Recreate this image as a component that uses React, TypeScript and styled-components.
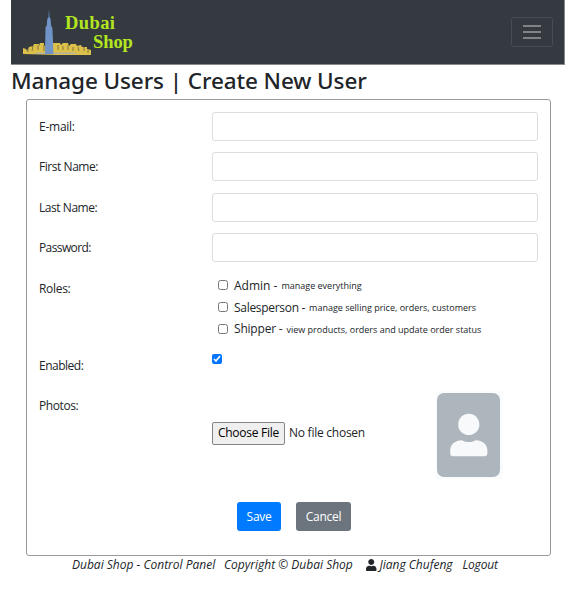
import React from "react";
import styled, { createGlobalStyle } from "styled-components";

const GlobalStyle = createGlobalStyle`
  * { box-sizing: border-box; }
  body {
    margin: 0;
    background: #fff;
    color: #212529;
    font: 12px/18px "Open Sans", "Noto Sans", sans-serif;
  }
`;

const Page = styled.div`
  width: 554px;
  height: 590px;
  margin-left: 11px;
`;

const Navbar = styled.nav`
  display: flex;
  align-items: center;
  justify-content: space-between;
  height: 65px;
  padding: 0 11px 0 12px;
  background: #343a40;
  border: solid #868b90;
  border-width: 0 1px 1px 0;
`;

const Brand = styled.a`
  display: flex;
  height: 46px;
`;

const Skyline = styled.svg`
  width: 68px;
  height: 46px;
`;

const BrandName = styled.span`
  display: flex;
  flex-direction: column;
  margin: 5px 0 0 -26px;
  color: #b3e61e;
  font: bold 18.5px/19px "Liberation Serif", serif;
`;

const BrandWord = styled.span<{ $indent?: number; $spacing: number }>`
  margin-left: ${(p) => p.$indent ?? 0}px;
  letter-spacing: ${(p) => p.$spacing}px;
`;

const Toggler = styled.button`
  display: grid;
  place-items: center;
  width: 42px;
  height: 30px;
  padding: 0;
  background: transparent;
  border: 1px solid #484d53;
  border-radius: 3px;
`;

const Title = styled.h2`
  height: 34px;
  margin: 0;
  font-family: "Noto Sans", "Open Sans", sans-serif;
  font-size: 22.5px;
  line-height: 31px;
  font-weight: 500;
  white-space: nowrap;
`;

const Panel = styled.form`
  width: 525px;
  height: 457px;
  margin-left: 15px;
  padding: 12px 12px 0;
  border: 1px solid #969a9e;
  border-radius: 3px;
`;

const Row = styled.div<{ $height?: number }>`
  display: grid;
  grid-template-columns: 173px 326px;
  height: ${(p) => p.$height ?? 40.4}px;
`;

const Text = styled.span<{ $spacing?: number }>`
  letter-spacing: ${(p) => p.$spacing ?? 0}px;
  white-space: nowrap;
`;

const Label = styled(Text)`
  padding-top: 6px;
`;

const Input = styled.input`
  width: 326px;
  height: 29px;
  border: 1px solid #dadee2;
  border-radius: 3px;
`;

const Roles = styled.div`
  display: flex;
  flex-direction: column;
  padding: 1px 0 0 6px;
`;

const Role = styled.label`
  display: flex;
  align-items: center;
  height: 21.7px;
`;

const Checkbox = styled.input`
  width: 10px;
  height: 10px;
  margin: 0;
`;

const RoleName = styled(Text)`
  margin: 1px 0 0 6px;
`;

const RoleNote = styled(Text)`
  margin: 2px 0 0 4px;
  font-size: 9px;
`;

const EnabledCell = styled.div`
  display: flex;
  align-items: flex-start;
  padding-top: 3px;
`;

const Photos = styled.div`
  display: flex;
  align-items: center;
  justify-content: space-between;
  height: 88px;
  padding-right: 35px;
`;

const FilePicker = styled.div`
  display: flex;
  align-items: center;
  gap: 4px;
  margin-top: -3px;
`;

const FileButton = styled.button`
  width: 73px;
  height: 23px;
  padding: 0;
  color: #000;
  background: #efefef;
  border: 1px solid #858585;
  border-radius: 2px;
  font: inherit;
`;

const Avatar = styled.svg`
  width: 67px;
  height: 88px;
`;

const Actions = styled.div`
  display: flex;
  gap: 15px;
  padding-left: 198px;
`;

const Button = styled.button<{ $color: string; $width: number }>`
  width: ${(p) => p.$width}px;
  height: 29px;
  padding: 1px 0 0;
  color: #fff;
  background: ${(p) => p.$color};
  border: 0;
  border-radius: 3px;
  font: inherit;
`;

const Footer = styled.footer`
  display: flex;
  height: 18px;
  margin-left: 61px;
  font-style: italic;
`;

const FooterItem = styled(Text)<{ $width: number }>`
  width: ${(p) => p.$width}px;
`;

const UserIcon = styled.svg`
  width: 10.5px;
  height: 12px;
  margin: 3px 3px 0 0;
`;

const userPath =
  "M224 256c70.7 0 128-57.3 128-128S294.7 0 224 0 96 57.3 96 128s57.3 128 128 128zm89.6 32h-16.7c-22.2 10.2-46.9 16-72.9 16s-50.6-5.8-72.9-16h-16.7C60.2 288 0 348.2 0 422.4V464c0 26.5 21.5 48 48 48h352c26.5 0 48-21.5 48-48v-41.6c0-74.2-60.2-134.4-134.4-134.4z";

const avatarPath =
  "M224 256c70.7 0 128-57.3 128-128S294.7 0 224 0 96 57.3 96 128s57.3 128 128 128zM140 318C60 318 0 368 0 440v36c0 22 12 36 34 36h380c22 0 34-14 34-36v-36c0-72-60-122-140-122-28 16-55 22-84 22s-56-6-84-22z";

const fields = [
  { label: "E-mail:", type: "email", spacing: -0.25 },
  { label: "First Name:", type: "text", spacing: -0.45 },
  { label: "Last Name:", type: "text", spacing: -0.45 },
  { label: "Password:", type: "password", spacing: -0.6 },
];

const roles = [
  { name: "Admin -", note: "manage everything", spacing: 0, noteSpacing: 0 },
  { name: "Salesperson -", note: "manage selling price, orders, customers", spacing: -0.3, noteSpacing: 0 },
  { name: "Shipper -", note: "view products, orders and update order status", spacing: -0.2, noteSpacing: 0 },
];

export default function App() {
  return (
    <Page>
      <GlobalStyle />
      <Navbar>
        <Brand>
          <Skyline viewBox="0 0 68 46">
            <path
              fill="#dcc04a"
              d="M0 45V39l3 1 1 2 2-4 4-1 1-2h5v2l1-3h4v3l2-1 6-1v-1h8l1 2 2-2h5l1 3 2-2h5l1 2 4-1 1 2h5v2l4 1v6z"
            />
            <path
              stroke="#625a3d"
              strokeWidth=".7"
              d="M5 39v4M10 37l-1 5M15 36v5M21 36v6M35 36v5M40 37v4M45 36v5M50 38v4M55 38l1 4M61 38v4M65 41v3"
            />
            <path fill="#b6b4a0" d="M10 45l5-1.5h35l6 1.5z" />
            <path fill="#7094c7" d="M26 0l.5 8 1.1 2 .6 7 1.2 2 .5 11 .5 15h-8.4l.5-27 1.2-1 .6-7 1.2-2z" />
          </Skyline>
          <BrandName>
            <BrandWord $indent={0} $spacing={0.4}>Dubai</BrandWord>
            <BrandWord $indent={28} $spacing={-0.1}>Shop</BrandWord>
          </BrandName>
        </Brand>
        <Toggler aria-label="Toggle navigation" type="button">
          <svg width="18" height="16" viewBox="0 0 18 16">
            <path d="M0 2h18M0 8h18M0 14h18" stroke="#999ca0" strokeWidth="1.4" />
          </svg>
        </Toggler>
      </Navbar>
      <Title><Text $spacing={-0.1}>Manage Users | Create New User</Text></Title>
      <Panel>
        {fields.map((f) => (
          <Row key={f.label}>
            <Label $spacing={f.spacing}>{f.label}</Label>
            <Input type={f.type} aria-label={f.label} />
          </Row>
        ))}
        <Row $height={77}>
          <Label $spacing={-0.3}>Roles:</Label>
          <Roles>
            {roles.map((r) => (
              <Role key={r.name}>
                <Checkbox type="checkbox" />
                <RoleName $spacing={r.spacing}>{r.name}</RoleName>
                <RoleNote $spacing={r.noteSpacing}>{r.note}</RoleNote>
              </Role>
            ))}
          </Roles>
        </Row>
        <Row>
          <Label $spacing={-0.5}>Enabled:</Label>
          <EnabledCell>
            <Checkbox type="checkbox" defaultChecked />
          </EnabledCell>
        </Row>
        <Row $height={111}>
          <Label $spacing={-0.4}>Photos:</Label>
          <Photos>
            <FilePicker>
              <FileButton type="button"><Text $spacing={-0.25}>Choose File</Text></FileButton>
              <Text $spacing={-0.25}>No file chosen</Text>
            </FilePicker>
            <Avatar viewBox="0 0 67 88">
              <path fill="#fafbfc" d="M0 0h67v88H0z" />
              <rect x="1" y="2" width="63" height="84" rx="7" fill="#adb5bd" />
              <g transform="translate(14.2 22.8) scale(.083)">
                <path fill="#f8f9fa" d={avatarPath} />
              </g>
            </Avatar>
          </Photos>
        </Row>
        <Actions>
          <Button type="button" $color="#007bff" $width={44}><Text $spacing={-0.3}>Save</Text></Button>
          <Button type="button" $color="#6c757d" $width={55}><Text $spacing={-0.3}>Cancel</Text></Button>
        </Actions>
      </Panel>
      <Footer>
        <FooterItem $width={152}>Dubai Shop - Control Panel</FooterItem>
        <FooterItem $width={142}>Copyright © Dubai Shop</FooterItem>
        <UserIcon viewBox="0 0 448 512"><path fill="#212529" d={userPath} /></UserIcon>
        <FooterItem $width={83}>Jiang Chufeng</FooterItem>
        <FooterItem $width={40} $spacing={-0.2}>Logout</FooterItem>
      </Footer>
    </Page>
  );
}
